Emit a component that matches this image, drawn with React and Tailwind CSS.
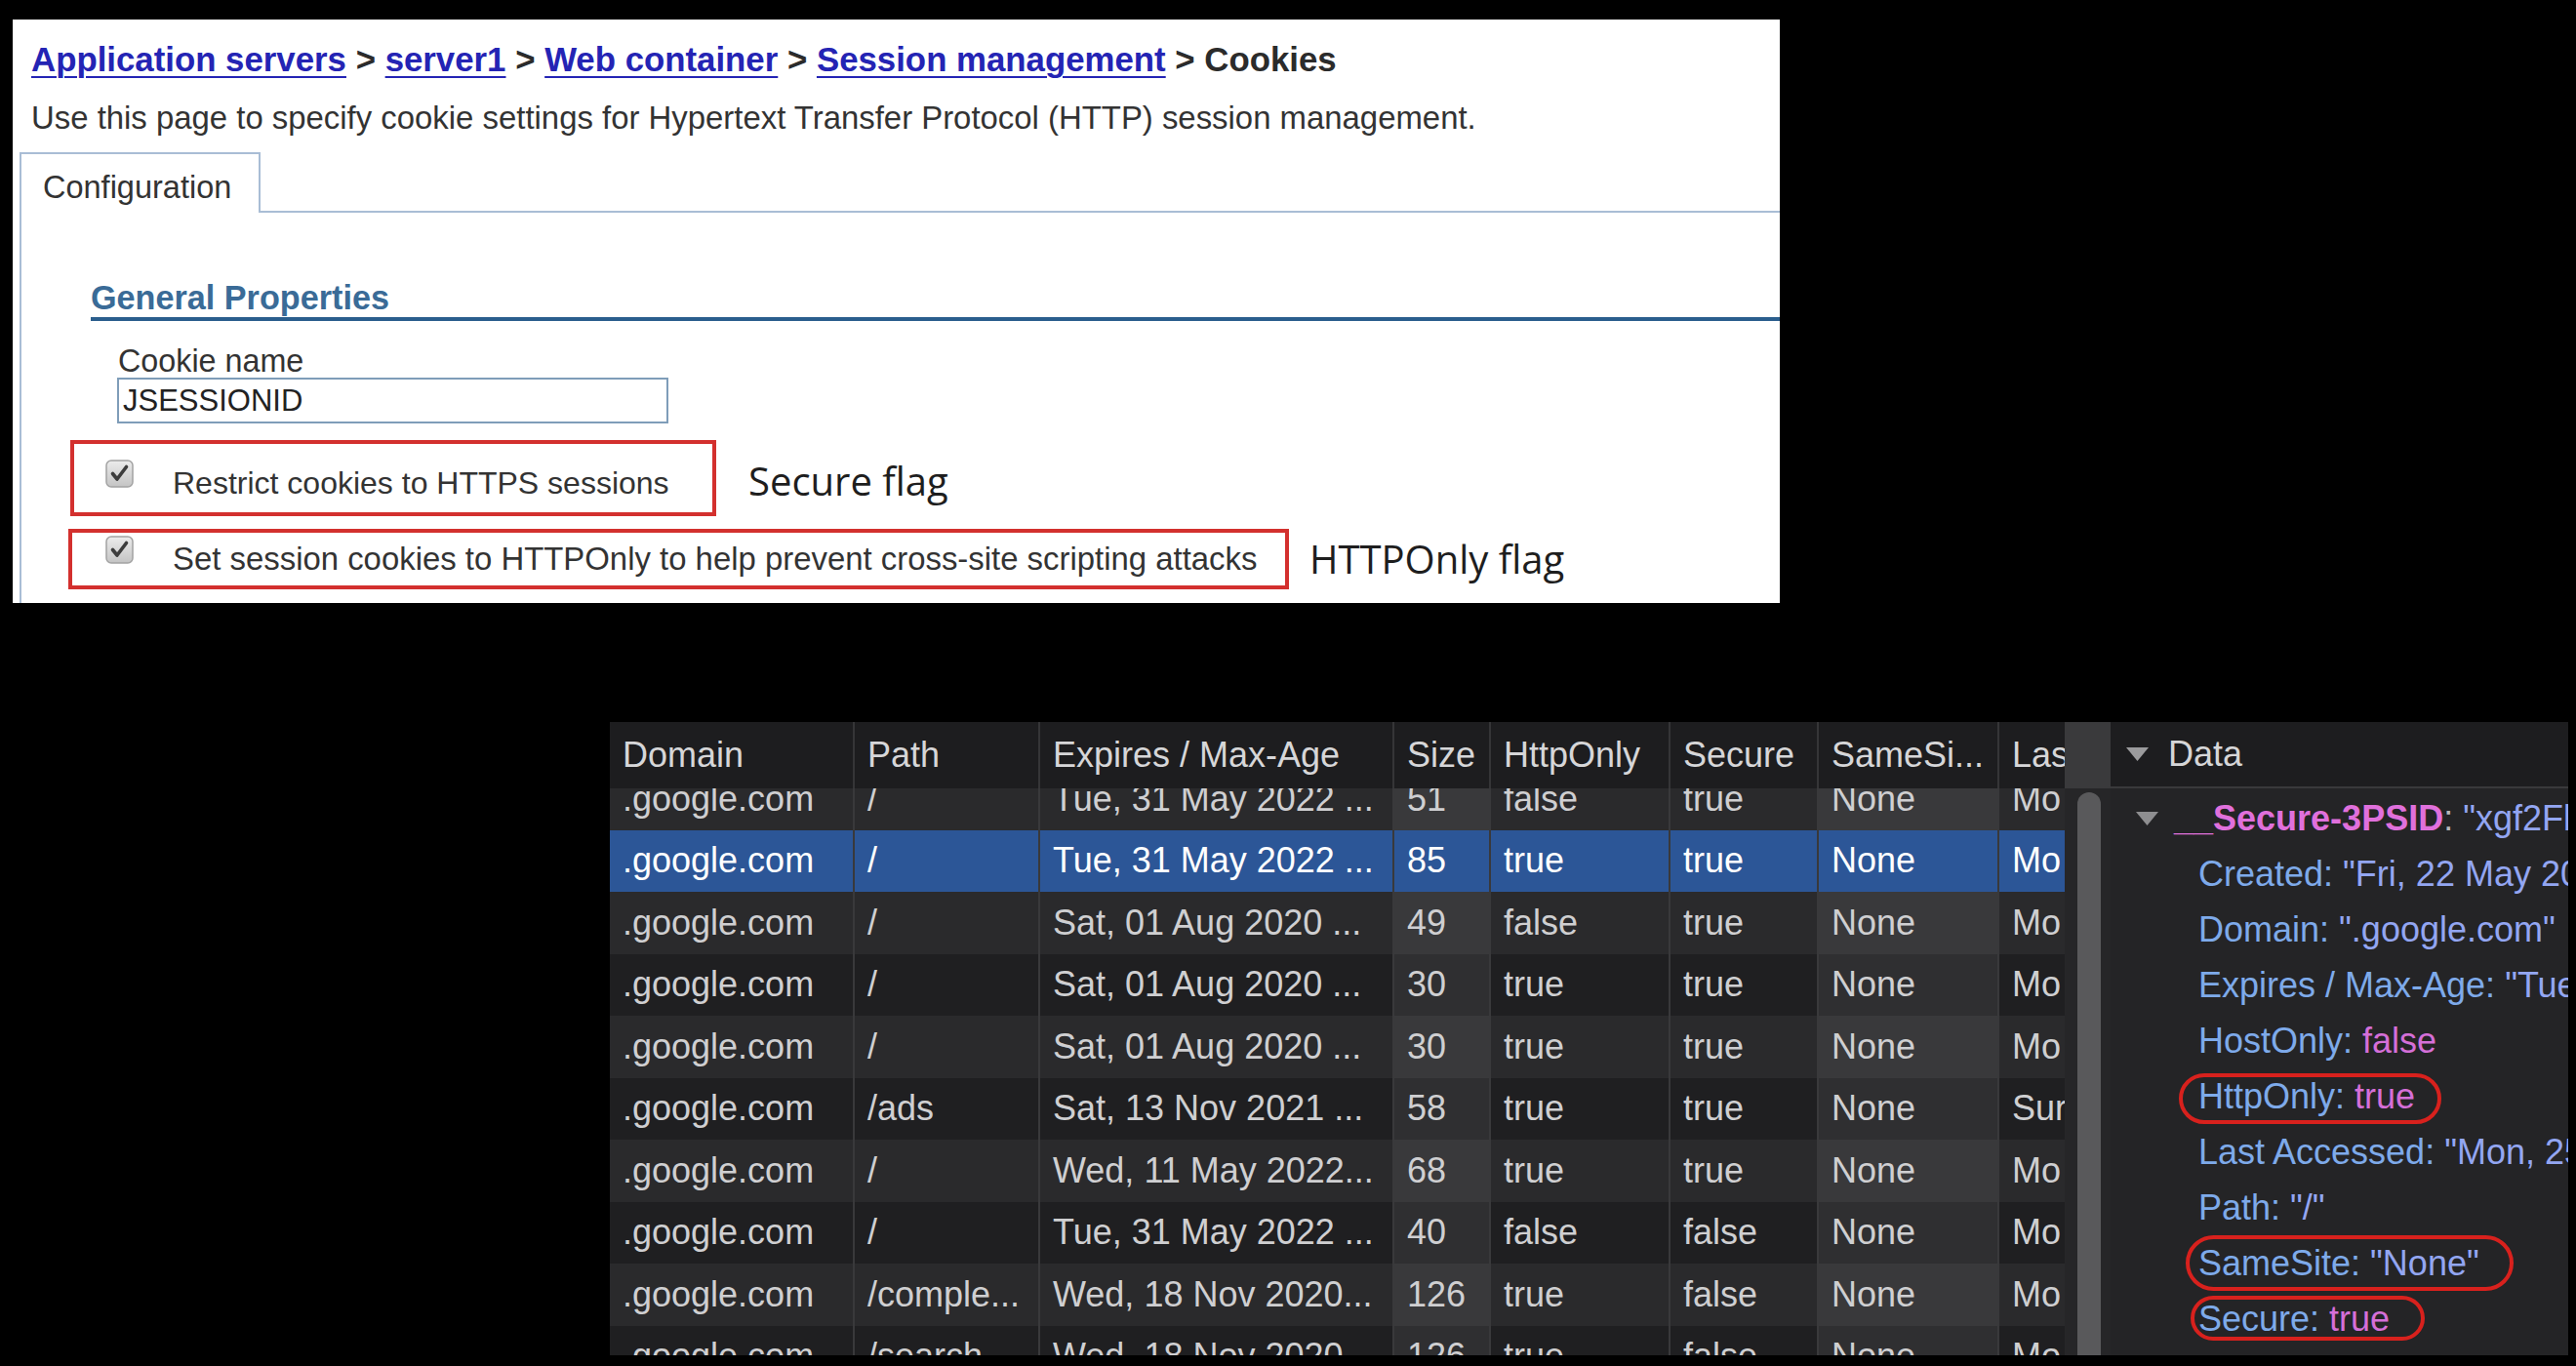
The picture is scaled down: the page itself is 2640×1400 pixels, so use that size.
import React from 'react';

const columns = [
  { label: 'Domain', w: 'w-[251px]' },
  { label: 'Path', w: 'w-[190px]' },
  { label: 'Expires / Max-Age', w: 'w-[363px]' },
  { label: 'Size', w: 'w-[99px]', shade: true },
  { label: 'HttpOnly', w: 'w-[184px]' },
  { label: 'Secure', w: 'w-[152px]' },
  { label: 'SameSi...', w: 'w-[185px]', shade: true },
  { label: 'Las', w: 'w-[67px]', last: true },
];

const rows = [
  ['.google.com', '/', 'Tue, 31 May 2022 ...', '51', 'false', 'true', 'None', 'Mo'],
  ['.google.com', '/', 'Tue, 31 May 2022 ...', '85', 'true', 'true', 'None', 'Mo'],
  ['.google.com', '/', 'Sat, 01 Aug 2020 ...', '49', 'false', 'true', 'None', 'Mo'],
  ['.google.com', '/', 'Sat, 01 Aug 2020 ...', '30', 'true', 'true', 'None', 'Mo'],
  ['.google.com', '/', 'Sat, 01 Aug 2020 ...', '30', 'true', 'true', 'None', 'Mo'],
  ['.google.com', '/ads', 'Sat, 13 Nov 2021 ...', '58', 'true', 'true', 'None', 'Sur'],
  ['.google.com', '/', 'Wed, 11 May 2022...', '68', 'true', 'true', 'None', 'Mo'],
  ['.google.com', '/', 'Tue, 31 May 2022 ...', '40', 'false', 'false', 'None', 'Mo'],
  ['.google.com', '/comple...', 'Wed, 18 Nov 2020...', '126', 'true', 'false', 'None', 'Mo'],
  ['.google.com', '/search', 'Wed, 18 Nov 2020...', '126', 'true', 'false', 'None', 'Mo'],
];

// key, value, kind of value (string | bool)
const fields = [
  ['Created', '"Fri, 22 May 2020 14:32:41 GMT"', 'str'],
  ['Domain', '".google.com"', 'str'],
  ['Expires / Max-Age', '"Tue, 31 May 2022 14:32:41 GMT"', 'str'],
  ['HostOnly', 'false', 'bool'],
  ['HttpOnly', 'true', 'bool'],
  ['Last Accessed', '"Mon, 25 May 2020 09:12:03 GMT"', 'str'],
  ['Path', '"/"', 'str'],
  ['SameSite', '"None"', 'str'],
  ['Secure', 'true', 'bool'],
];

function CheckBox() {
  return (
    <svg width="29" height="29" viewBox="0 0 29 29" className="shrink-0">
      <defs>
        <linearGradient id="cb" x1="0" y1="0" x2="0" y2="1">
          <stop offset="0" stopColor="#ececec" />
          <stop offset="1" stopColor="#c4c4c4" />
        </linearGradient>
      </defs>
      <rect x="1" y="1" width="27" height="27" rx="5" fill="url(#cb)" stroke="#a3a3a3" strokeWidth="1.5" />
      <path d="M7.5 14.5 L12 20 L21.5 7.5" fill="none" stroke="#3d3d3d" strokeWidth="3.6" strokeLinecap="round" strokeLinejoin="round" />
    </svg>
  );
}

function Triangle({ color = '#9b9b9d' }) {
  return (
    <svg width="25" height="16" viewBox="0 0 25 16" className="shrink-0">
      <path d="M1 1 H24 L12.5 15 Z" fill={color} />
    </svg>
  );
}

function ConfigPanel() {
  const link = 'text-[#2424b4] underline underline-offset-[5px] decoration-2';
  return (
    <div className="ml-[13px] w-[1811px] h-[598px] bg-white text-[#2b2b2b] font-['Liberation_Sans',Arial,sans-serif] overflow-hidden">
      <div className="pl-[19px] pt-[21px] text-[34.8px] leading-[40px] font-bold whitespace-nowrap">
        <span className={link}>Application servers</span> &gt; <span className={link}>server1</span> &gt;{' '}
        <span className={link}>Web container</span> &gt; <span className={link}>Session management</span> &gt; Cookies
      </div>
      <div className="pl-[19px] mt-[20px] text-[32.9px] leading-[40px] whitespace-nowrap text-[#333]">
        Use this page to specify cookie settings for Hypertext Transfer Protocol (HTTP) session management.
      </div>

      <div className="ml-[7px] mt-[15px] flex h-[62px]">
        <div className="w-[247px] h-full border-2 border-b-0 border-[#a9bdd5] pl-[22px] pt-[14px] text-[32.5px] leading-[40px] text-[#333]">
          Configuration
        </div>
        <div className="flex-1 border-b-2 border-[#a9bdd5]" />
      </div>

      <div className="ml-[7px] h-[400px] border-l-2 border-[#a9bdd5] flex flex-col">
        <div className="ml-[71px] mt-[67px] h-[44px] border-b-4 border-[#2b5e8d] text-[34.2px] leading-[40px] font-bold text-[#3a6b97]">
          General Properties
        </div>
        <div className="ml-[99px] mt-[24px] text-[32.3px] leading-[34px] text-[#333]">Cookie name</div>
        <div className="ml-[98px] w-[565px] h-[47px] border-2 border-[#7f9db9] pl-[4px] text-[31px] leading-[43px] text-[#222]">
          JSESSIONID
        </div>

        <div className="ml-[50px] mt-[17px] flex items-center">
          <div className="w-[662px] h-[78px] border-4 border-[#d3302e] flex items-start">
            <div className="ml-[32px] mt-[16px]">
              <CheckBox />
            </div>
            <div className="ml-[40px] mt-[20px] text-[32px] leading-[40px] whitespace-nowrap text-[#333]">
              Restrict cookies to HTTPS sessions
            </div>
          </div>
          <div className="ml-[33px] mt-[6px] font-['Open_Sans',sans-serif] text-[40px] leading-[50px] text-[#1e1e1e] whitespace-nowrap">
            Secure flag
          </div>
        </div>

        <div className="ml-[48px] mt-[13px] flex items-center">
          <div className="w-[1251px] h-[62px] border-4 border-[#d3302e] flex items-start">
            <div className="ml-[34px] mt-[3px]">
              <CheckBox />
            </div>
            <div className="ml-[40px] mt-[7px] text-[32.9px] leading-[40px] whitespace-nowrap text-[#333]">
              Set session cookies to HTTPOnly to help prevent cross-site scripting attacks
            </div>
          </div>
          <div className="ml-[21px] font-['Open_Sans',sans-serif] text-[40px] leading-[50px] text-[#1e1e1e] whitespace-nowrap">
            HTTPOnly flag
          </div>
        </div>
      </div>
    </div>
  );
}

function CookieTable() {
  return (
    <div className="w-[1491px] h-full flex flex-col">
      <div className="h-[68px] flex bg-[#1d1d1f] text-[#d6d6d8]">
        {columns.map((c) => (
          <div
            key={c.label}
            className={`${c.w} shrink-0 flex items-center pl-[13px] overflow-hidden whitespace-nowrap ${c.last ? '' : 'border-r-2 border-[#353537]'}`}
          >
            {c.label}
          </div>
        ))}
      </div>
      <div className="flex-1 overflow-hidden">
        <div className="-mt-[21px]">
          {rows.map((r, i) => {
            const selected = i === 1;
            const rowBg = selected ? 'bg-[#2c5697] text-white' : i % 2 === 0 ? 'bg-[#2a2a2c] text-[#cfcfd1]' : 'bg-[#1f1f21] text-[#cfcfd1]';
            return (
              <div key={i} className={`h-[63.5px] flex ${rowBg}`}>
                {r.map((cell, j) => {
                  const c = columns[j];
                  const shade = c.shade && !selected ? 'bg-white/[0.07]' : '';
                  return (
                    <div
                      key={j}
                      className={`${c.w} shrink-0 flex items-center pl-[13px] overflow-hidden whitespace-nowrap ${shade} ${c.last ? '' : 'border-r-2 border-[#39393b]'}`}
                    >
                      {cell}
                    </div>
                  );
                })}
              </div>
            );
          })}
        </div>
      </div>
    </div>
  );
}

function DataPanel() {
  return (
    <div className="w-[469px] h-full flex flex-col bg-[#242426] relative overflow-hidden">
      <div className="h-[68px] shrink-0 bg-[#1d1d1f] border-b-2 border-[#39393b] flex items-center pl-[15px]">
        <Triangle />
        <span className="ml-[19px] text-[#d6d6d8]">Data</span>
      </div>
      <div className="pt-[2px] whitespace-nowrap">
        <div className="h-[57px] flex items-center pl-[25px]">
          <Triangle color="#8e8e90" />
          <span className="ml-[15px] text-[#e070dc] font-semibold">__Secure-3PSID</span>
          <span className="text-[#b9b9bb]">:&nbsp;</span>
          <span className="text-[#93a6f2]">"xgf2FkR0a9Lz-3PSID"</span>
        </div>
        {fields.map(([k, v, kind]) => (
          <div key={k} className="h-[57px] flex items-center pl-[90px]">
            <span className="text-[#7eaaea]">{k}:&nbsp;</span>
            <span className={kind === 'bool' ? 'text-[#d56fd8]' : 'text-[#93a6f2]'}>{v}</span>
          </div>
        ))}
      </div>

      <div className="absolute left-[70px] top-[360px] w-[269px] h-[52px] border-4 border-[#d8211d] rounded-full" />
      <div className="absolute left-[77px] top-[526px] w-[336px] h-[57px] border-4 border-[#d8211d] rounded-full" />
      <div className="absolute left-[82px] top-[588px] w-[240px] h-[46px] border-4 border-[#d8211d] rounded-full" />
    </div>
  );
}

export default function App() {
  return (
    <div className="w-[2640px] h-[1400px] bg-black overflow-hidden pt-[20px]">
      <ConfigPanel />
      <div className="mt-[122px] ml-[625px] w-[2007px] h-[649px] flex text-[36px] leading-none font-['Liberation_Sans',Arial,sans-serif]">
        <CookieTable />
        <div className="w-[47px] h-full flex flex-col">
          <div className="h-[68px] bg-[#3a3a3c]" />
          <div className="flex-1 bg-[#262628] pl-[13px] pt-[4px]">
            <div className="w-[24px] h-full rounded-t-full bg-[#59595b]" />
          </div>
        </div>
        <DataPanel />
      </div>
    </div>
  );
}
